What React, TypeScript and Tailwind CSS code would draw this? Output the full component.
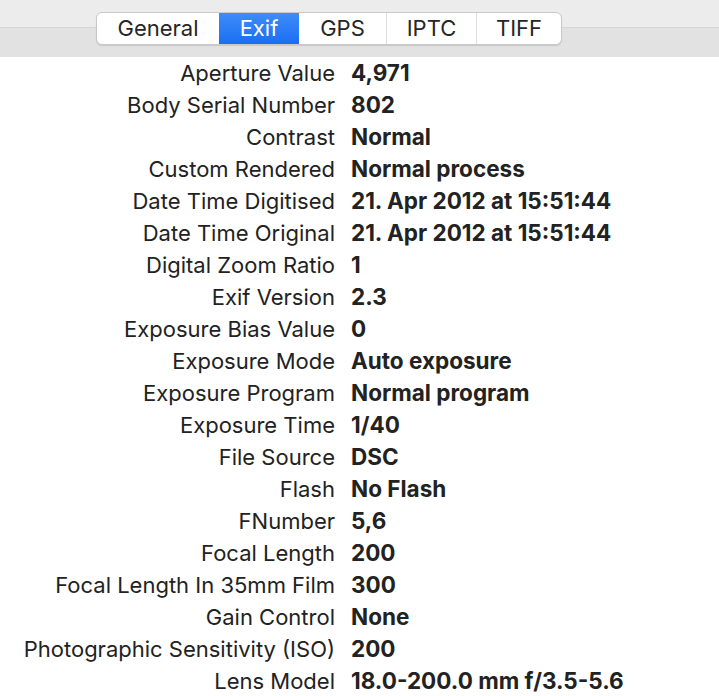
import React from "react";

type Row = { label: string; value: string };

const rows: Row[] = [
  { label: "Aperture Value", value: "4,971" },
  { label: "Body Serial Number", value: "802" },
  { label: "Contrast", value: "Normal" },
  { label: "Custom Rendered", value: "Normal process" },
  { label: "Date Time Digitised", value: "21. Apr 2012 at 15:51:44" },
  { label: "Date Time Original", value: "21. Apr 2012 at 15:51:44" },
  { label: "Digital Zoom Ratio", value: "1" },
  { label: "Exif Version", value: "2.3" },
  { label: "Exposure Bias Value", value: "0" },
  { label: "Exposure Mode", value: "Auto exposure" },
  { label: "Exposure Program", value: "Normal program" },
  { label: "Exposure Time", value: "1/40" },
  { label: "File Source", value: "DSC" },
  { label: "Flash", value: "No Flash" },
  { label: "FNumber", value: "5,6" },
  { label: "Focal Length", value: "200" },
  { label: "Focal Length In 35mm Film", value: "300" },
  { label: "Gain Control", value: "None" },
  { label: "Photographic Sensitivity (ISO)", value: "200" },
  { label: "Lens Model", value: "18.0-200.0 mm f/3.5-5.6" },
];

const tabs = [
  { name: "General", w: "w-[122px]" },
  { name: "Exif", w: "w-[80px]" },
  { name: "GPS", w: "w-[87px]" },
  { name: "IPTC", w: "w-[90px]" },
  { name: "TIFF", w: "w-[85px]" },
];

function TabBar({ active }: { active: string }) {
  return (
    <div className="h-[57px] pl-[96px] flex items-center bg-[linear-gradient(to_bottom,#ececec_0,#ececec_27px,#d6d6d6_27px,#d6d6d6_28px,#e2e2e2_28px)]">
      <div className="flex h-[33px] rounded-[6px] border border-[#c9c9c9] bg-white shadow-[0_1px_1px_rgba(0,0,0,0.12)] overflow-hidden">
        {tabs.map((t, i) => {
          const on = t.name === active;
          return (
            <div
              key={t.name}
              className={`${t.w} flex items-center justify-center text-[22px] ${
                on
                  ? "bg-[linear-gradient(to_bottom,#3f8cf9,#1a6ef3)] text-white"
                  : "text-[#262626]"
              } ${i > 0 && !on && tabs[i - 1].name !== active ? "border-l border-[#dedede]" : ""}`}
            >
              {t.name}
            </div>
          );
        })}
      </div>
    </div>
  );
}

export default function App() {
  return (
    <div className="w-[719px] h-[696px] bg-white overflow-hidden font-['Inter','Liberation_Sans',sans-serif]">
      <TabBar active="Exif" />
      <div className="flex flex-col">
        {rows.map((r) => (
          <div key={r.label} className="flex h-8 items-center text-[22px] text-[#222]">
            <span className="w-[335px] text-right shrink-0">{r.label}</span>
            <span className="pl-4 font-bold text-[22.5px]">{r.value}</span>
          </div>
        ))}
      </div>
    </div>
  );
}
